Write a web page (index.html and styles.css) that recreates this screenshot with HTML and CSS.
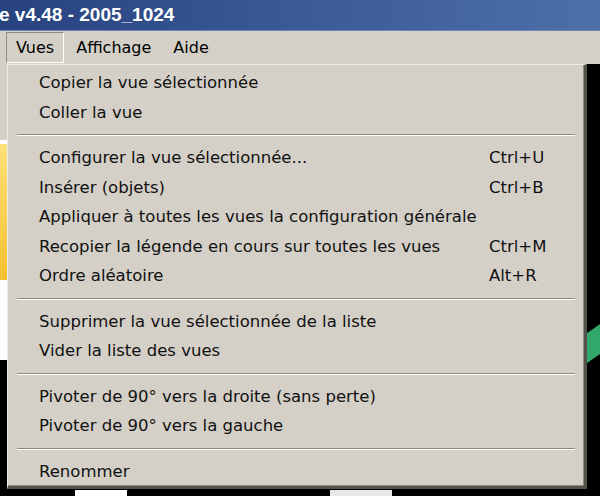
FILE: index.html
```html
<!DOCTYPE html>
<html lang="fr">
<head>
  <meta charset="UTF-8" />
  <title>Vues</title>
  <link rel="stylesheet" href="styles.css">
</head>
<body>
  <div class="titlebar">e v4.48 - 2005_1024</div>

  <div class="menubar">
    <span class="menu-title open">Vues</span>
    <span class="menu-title">Affichage</span>
    <span class="menu-title">Aide</span>
  </div>

  <div class="stage">
    <div class="side"></div>
    <div class="canvas">
      <div class="blob"></div>
      <div class="thumb"></div>
      <div class="thumb thumb-2"></div>
    </div>

    <!-- dropdown for "Vues" -->
    <div class="dropdown">
      <div class="item"><span>Copier la vue sélectionnée</span></div>
      <div class="item"><span>Coller la vue</span></div>
      <div class="sep"></div>
      <div class="item"><span>Configurer la vue sélectionnée...</span><span class="key">Ctrl+U</span></div>
      <div class="item"><span>Insérer (objets)</span><span class="key">Ctrl+B</span></div>
      <div class="item"><span>Appliquer à toutes les vues la configuration générale</span></div>
      <div class="item"><span>Recopier la légende en cours sur toutes les vues</span><span class="key">Ctrl+M</span></div>
      <div class="item"><span>Ordre aléatoire</span><span class="key">Alt+R</span></div>
      <div class="sep"></div>
      <div class="item"><span>Supprimer la vue sélectionnée de la liste</span></div>
      <div class="item"><span>Vider la liste des vues</span></div>
      <div class="sep"></div>
      <div class="item"><span>Pivoter de 90° vers la droite (sans perte)</span></div>
      <div class="item"><span>Pivoter de 90° vers la gauche</span></div>
      <div class="sep"></div>
      <div class="item"><span>Renommer</span></div>
    </div>
  </div>
</body>
</html>
```

FILE: styles.css
```css
body {
  margin: 0;
  width: 600px;
  height: 496px;
  overflow: hidden;
  font-family: 'DejaVu Sans', sans-serif;
  background: #000;
}

.titlebar {
  height: 30px;
  line-height: 30px;
  margin-left: -1px;
  background: linear-gradient(to right, #27427f, #3b5a98 50%, #4d70a8);
  border-bottom: 1px solid #6d88b8;
  color: #fff;
  font-family: 'Liberation Sans', sans-serif;
  font-weight: bold;
  font-size: 19px;
  white-space: nowrap;
}

.menubar {
  height: 33px;
  background: #d4d0c8;
  display: flex;
  align-items: center;
  padding-left: 6px;
  font-size: 16px;
  color: #000;
}

.menu-title {
  padding: 5px 9px 5px 9px;
  margin-right: 2px;
  border: 1px solid transparent;
}

.menu-title.open {
  border-color: #8c8a84 #fff #fff #8c8a84;
}

.stage {
  position: relative;
  height: 432px;
  display: flex;
}

.side {
  width: 8px;
  background: linear-gradient(to bottom, #d4d0c8 0, #d4d0c8 76px, #fff 76px, #fff 80px, #ffe07a 80px, #f5c030 216px, #fff 216px, #fff 296px, #000 296px);
}

.canvas {
  flex: 1;
  position: relative;
  background: #000;
  overflow: hidden;
}

.blob {
  position: absolute;
  right: -20px;
  top: 260px;
  width: 40px;
  height: 30px;
  background: #2fa86a;
  transform: skewY(-35deg);
}

.thumb {
  position: absolute;
  left: 67px;
  bottom: 0;
  width: 52px;
  height: 6px;
  background: #fff;
}

.thumb-2 {
  left: 322px;
  width: 62px;
  background: #e8e8e8;
}

.dropdown {
  position: absolute;
  left: 7px;
  top: 0;
  width: 576px;
  padding: 3px 0 0 0;
  height: 418px;
  background: #d4d0c8;
  border-top: 1px solid #eceae4;
  border-left: 1px solid #eceae4;
  border-right: 3px solid #55524c;
  border-bottom: 3px solid #55524c;
  box-shadow: inset -1px -1px 0 #8c8a84;
  font-size: 16.5px;
  color: #111;
}

.item {
  height: 29.5px;
  display: flex;
  align-items: center;
  justify-content: space-between;
  padding: 0 39px 0 31px;
  white-space: nowrap;
}

.key {
  width: 56px;
}

.sep {
  height: 16px;
  margin: 0 9px 0 9px;
  position: relative;
}

.sep::before {
  content: "";
  position: absolute;
  left: 0;
  right: 0;
  top: 7px;
  border-top: 1px solid #8c8a84;
  border-bottom: 1px solid #fff;
}
```
